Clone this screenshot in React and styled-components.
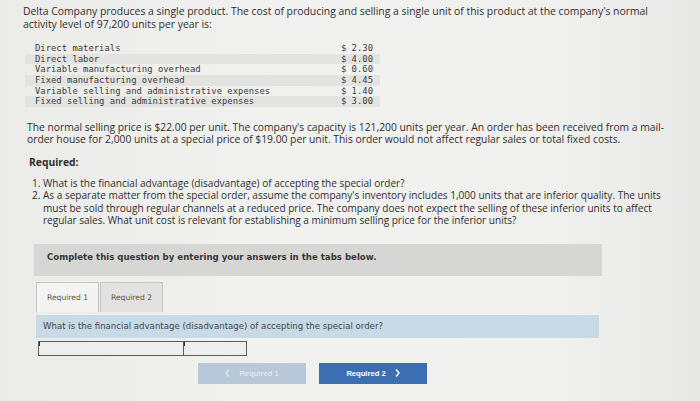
import React from "react";
import styled, { createGlobalStyle } from "styled-components";

const Global = createGlobalStyle`
  html, body { margin: 0; padding: 0; background: #efefed; }
  body { width: 700px; height: 401px; overflow: hidden; }
`;

const Page = styled.div`
  width: 700px;
  height: 401px;
  box-sizing: border-box;
  padding: 5px 0 0 23px;
  background: linear-gradient(90deg, #ebebe9 0%, #f1f1ef 40%, #f0f0ee 80%, #e8e8e6 100%);
  color: #2f2f2f;
  font-family: "Open Sans", "Liberation Sans", sans-serif;
  font-size: 10.3px;
`;

const Para = styled.p`
  margin: ${(p) => p.$mt || 0}px 0 0 ${(p) => p.$indent || 0}px;
  line-height: 12.6px;
  font-size: ${(p) => p.$fs || 10.3}px;
  white-space: nowrap;
`;

const CostTable = styled.div`
  margin: 13px 0 0 2px;
  width: 355px;
  font-family: "DejaVu Sans Mono", "Liberation Mono", monospace;
  font-size: 8.9px;
  color: #3c3c3c;
`;

const CostRow = styled.div`
  display: flex;
  justify-content: space-between;
  height: 10.6px;
  line-height: 10.6px;
  padding: 0 7px 0 10px;
  white-space: nowrap;
  background: ${(p) => (p.$alt ? "#e3e3e1" : "transparent")};
`;

const Amount = styled.span`
  white-space: nowrap;
`;

const Required = styled.div`
  margin: 10px 0 0 6px;
  font-weight: 700;
  line-height: 12.6px;
`;

const List = styled.ol`
  margin: 8px 0 0 0;
  padding: 0 0 0 20px;
  line-height: 12.6px;
  font-size: ${(p) => p.$fs}px;
`;

const Item = styled.li`
  margin: 0;
  white-space: nowrap;
`;

const Panel = styled.div`
  margin: 17px 0 0 11px;
  width: 568px;
  font-family: "DejaVu Sans", Verdana, sans-serif;
`;

const Notice = styled.div`
  height: 32px;
  box-sizing: border-box;
  padding: 8px 0 0 13px;
  line-height: 10px;
  background: #d6d6d4;
  font-weight: 700;
  font-size: 8.6px;
  color: #363636;
`;

const Tabs = styled.div`
  display: flex;
  gap: 1px;
  padding-left: 2px;
  margin-top: 6px;
`;

const Tab = styled.div`
  width: 63px;
  height: 30px;
  box-sizing: border-box;
  border: 1px solid #c6c6c4;
  border-bottom: none;
  background: ${(p) => (p.$active ? "#f3f3f2" : "#e2e2e0")};
  display: flex;
  align-items: center;
  justify-content: center;
  font-size: 7.6px;
  color: #555;
`;

const QuestionBar = styled.div`
  margin: 3px 0 0 2px;
  height: 23px;
  width: 563px;
  box-sizing: border-box;
  padding-left: 7px;
  display: flex;
  align-items: center;
  background: #c8dae5;
  font-size: 8.6px;
  color: #454545;
`;

const InputRow = styled.div`
  display: flex;
  margin: 3px 0 0 4px;
`;

const Field = styled.div`
  position: relative;
  width: ${(p) => p.$w}px;
  height: 15px;
  box-sizing: border-box;
  border: 1.5px solid #5c5c5c;
  border-left-width: ${(p) => (p.$first ? 1.5 : 0)}px;
  background: #eeeeed;
  &::before {
    content: "";
    position: absolute;
    left: 0;
    top: 0;
    width: 1px;
    height: 4px;
    background: #333;
  }
`;

const NavRow = styled.div`
  display: flex;
  gap: 13px;
  margin: 7px 0 0 164px;
`;

const NavButton = styled.div`
  width: 108px;
  height: 21px;
  display: flex;
  align-items: center;
  justify-content: center;
  gap: 9px;
  font-family: "Liberation Sans", Arial, sans-serif;
  font-size: 7.6px;
  font-weight: 700;
  background: ${(p) => (p.$primary ? "#3b6fb1" : "#b8c8d8")};
  color: ${(p) => (p.$primary ? "#ffffff" : "#dde6ef")};
`;

const Chevron = styled.svg`
  width: 5px;
  height: 8px;
  fill: none;
  stroke: currentColor;
  stroke-width: 1.4;
`;

export default function App() {
  const costs = [
    ["Direct materials", "$ 2.30"],
    ["Direct labor", "$ 4.00"],
    ["Variable manufacturing overhead", "$ 0.60"],
    ["Fixed manufacturing overhead", "$ 4.45"],
    ["Variable selling and administrative expenses", "$ 1.40"],
    ["Fixed selling and administrative expenses", "$ 3.00"],
  ];
  return (
    <Page>
      <Global />
      <Para $fs={10.4}>
        Delta Company produces a single product. The cost of producing and selling a single unit of this product at the company's normal
        <br />
        activity level of 97,200 units per year is:
      </Para>
      <CostTable>
        {costs.map(([label, amt], i) => (
          <CostRow key={label} $alt={i % 2 === 1}>
            <span>{label}</span>
            <Amount>{amt}</Amount>
          </CostRow>
        ))}
      </CostTable>
      <Para $mt={14} $indent={4} $fs={10.3}>
        The normal selling price is $22.00 per unit. The company's capacity is 121,200 units per year. An order has been received from a mail-
        <br />
        order house for 2,000 units at a special price of $19.00 per unit. This order would not affect regular sales or total fixed costs.
      </Para>
      <Required>Required:</Required>
      <List $fs={10.05}>
        <Item>What is the financial advantage (disadvantage) of accepting the special order?</Item>
        <Item>
          As a separate matter from the special order, assume the company's inventory includes 1,000 units that are inferior quality. The units
          <br />
          must be sold through regular channels at a reduced price. The company does not expect the selling of these inferior units to affect
          <br />
          regular sales. What unit cost is relevant for establishing a minimum selling price for the inferior units?
        </Item>
      </List>
      <Panel>
        <Notice>Complete this question by entering your answers in the tabs below.</Notice>
        <Tabs>
          <Tab $active>Required 1</Tab>
          <Tab>Required 2</Tab>
        </Tabs>
        <QuestionBar>What is the financial advantage (disadvantage) of accepting the special order?</QuestionBar>
        <InputRow>
          <Field $first $w={146} />
          <Field $w={63} />
        </InputRow>
        <NavRow>
          <NavButton>
            <Chevron viewBox="0 0 5 8"><path d="M4 0.5 L1 4 L4 7.5" /></Chevron>
            <span>Required 1</span>
          </NavButton>
          <NavButton $primary>
            <span>Required 2</span>
            <Chevron viewBox="0 0 5 8"><path d="M1 0.5 L4 4 L1 7.5" /></Chevron>
          </NavButton>
        </NavRow>
      </Panel>
    </Page>
  );
}
